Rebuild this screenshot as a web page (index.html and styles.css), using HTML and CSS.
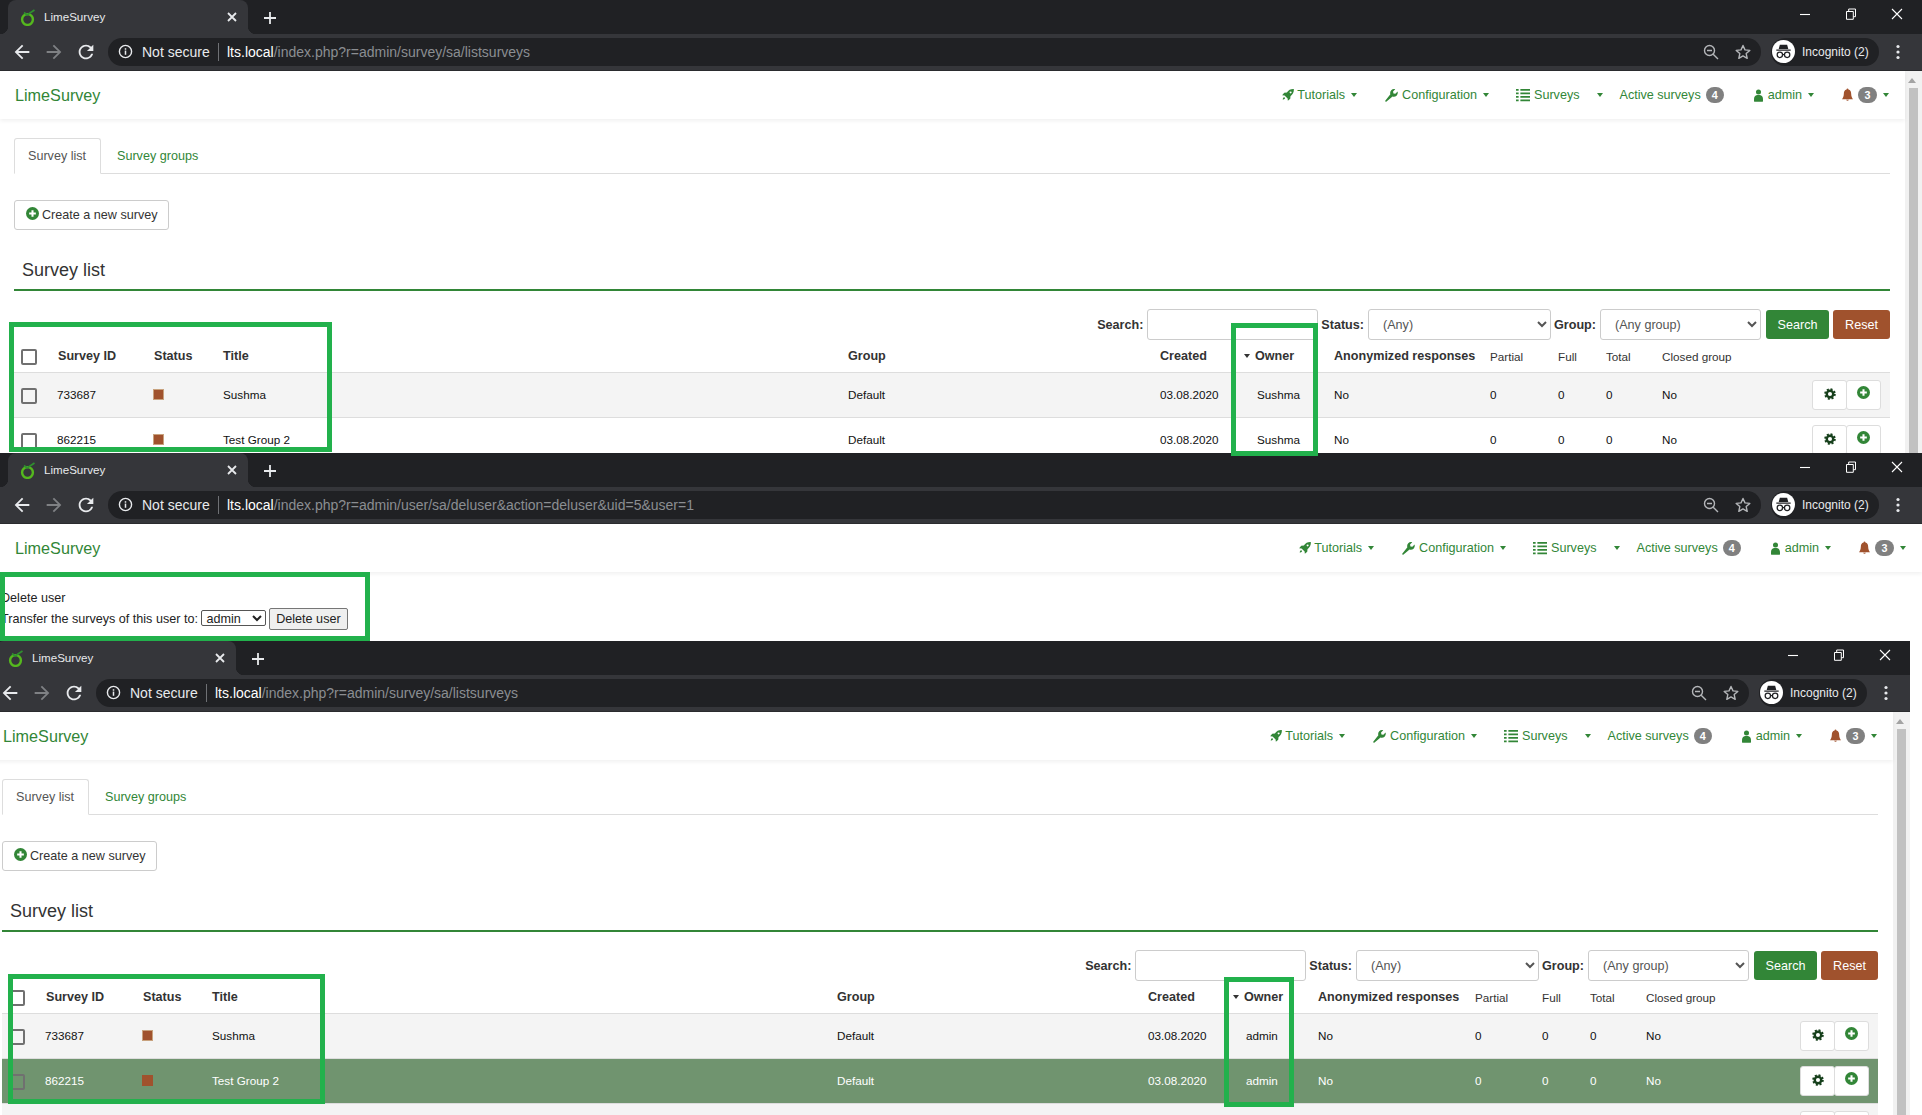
FILE: index.html
```html
<!DOCTYPE html>
<html lang="en">
<head>
<meta charset="utf-8">
<title>LimeSurvey</title>
<link rel="stylesheet" href="styles.css">
</head>
<body>
<svg class="defs" width="0" height="0" aria-hidden="true">
  <symbol id="i-lime" viewBox="0 0 15 17"><circle cx="7.500" cy="10.500" r="5.400" fill="none" stroke="#55b81e" stroke-width="2.400"/><path d="M4 3.500L7 6l7.500-5" fill="none" stroke="#2f8f2f" stroke-width="1.700"/></symbol>
  <symbol id="i-back" viewBox="0 0 24 24"><path d="M20 11H7.830l5.590-5.590L12 4l-8 8 8 8 1.410-1.410L7.830 13H20v-2z"/></symbol>
  <symbol id="i-fwd" viewBox="0 0 24 24"><path d="M12 4l-1.410 1.410L16.170 11H4v2h12.170l-5.580 5.590L12 20l8-8z"/></symbol>
  <symbol id="i-reload" viewBox="0 0 24 24"><path d="M17.650 6.350A7.958 7.958 0 0 0 12 4c-4.420 0-7.990 3.580-7.990 8s3.570 8 7.990 8c3.730 0 6.840-2.550 7.730-6h-2.080A5.990 5.990 0 0 1 12 18c-3.310 0-6-2.690-6-6s2.690-6 6-6c1.660 0 3.140.690 4.220 1.780L13 11h7V4l-2.350 2.350z"/></symbol>
  <symbol id="i-info" viewBox="0 0 16 16"><circle cx="8" cy="8" r="6.500" fill="none" stroke="currentColor" stroke-width="1.500"/><rect x="7.200" y="7" width="1.600" height="4.500" fill="currentColor"/><rect x="7.200" y="4.500" width="1.600" height="1.600" fill="currentColor"/></symbol>
  <symbol id="i-zoom" viewBox="0 0 16 16"><circle cx="6.500" cy="6.500" r="5" fill="none" stroke="currentColor" stroke-width="1.400"/><path d="M10.200 10.200l4.800 4.800M4 6.500h5" fill="none" stroke="currentColor" stroke-width="1.400"/></symbol>
  <symbol id="i-star" viewBox="0 0 16 16"><path d="M8 1.500l2 4.400 4.800.5-3.600 3.200 1 4.700L8 11.900l-4.200 2.400 1-4.700L1.200 6.400 6 5.900z" fill="none" stroke="currentColor" stroke-width="1.400" stroke-linejoin="round"/></symbol>
  <symbol id="i-incog" viewBox="0 0 24 24"><circle cx="12" cy="12" r="12" fill="#fff"/><path d="M8.200 5h7.600l1.200 4.500H7zM4.500 10h15v1.300h-15z" fill="#202124"/><circle cx="8.200" cy="15.500" r="2.800" fill="none" stroke="#202124" stroke-width="1.300"/><circle cx="15.800" cy="15.500" r="2.800" fill="none" stroke="#202124" stroke-width="1.300"/><path d="M11 15.200h2" stroke="#202124" stroke-width="1.300"/></symbol>
  <symbol id="i-kebab" viewBox="0 0 4 16"><circle cx="2" cy="2.500" r="1.600"/><circle cx="2" cy="8" r="1.600"/><circle cx="2" cy="13.500" r="1.600"/></symbol>
  <symbol id="i-restore" viewBox="0 0 12 12"><path d="M1.500 3.500h6.800v7.800H1.500zM3.700 3.500V1h6.800v7.700H8.300" fill="none" stroke="currentColor" stroke-width="1"/></symbol>
  <symbol id="i-close" viewBox="0 0 12 12"><path d="M1 1l10 10M11 1L1 11" fill="none" stroke="currentColor" stroke-width="1.100"/></symbol>
  <symbol id="i-min" viewBox="0 0 12 12"><path d="M1 6.500h10" fill="none" stroke="currentColor" stroke-width="1.100"/></symbol>
  <symbol id="i-x" viewBox="0 0 12 12"><path d="M2 2l8 8M10 2l-8 8" fill="none" stroke="currentColor" stroke-width="1.800"/></symbol>
  <symbol id="i-plus" viewBox="0 0 14 14"><path d="M7 1v12M1 7h12" fill="none" stroke="currentColor" stroke-width="1.800"/></symbol>
  <symbol id="i-rocket" viewBox="0 0 16 16"><path fill-rule="evenodd" d="M15.800.2c-3.700-.3-7 1.200-9.300 4.500L3 5 .2 8.200l3.200.3 4.100 4.100.3 3.200L11 13l.3-3.500c3.300-2.300 4.800-5.600 4.500-9.300zM11.500 3.200a1.300 1.300 0 1 1-.01 0zM2.800 10.800c-1 .5-1.700 2.200-1.900 3.300 1.100-.2 2.800-.9 3.300-1.900z"/></symbol>
  <symbol id="i-wrench" viewBox="0 0 16 16"><path d="M15.500 3.200l-2.800 2.700-2.300-.5-.5-2.300L12.600.4C10.900-.2 9 .2 7.700 1.500 6.400 2.800 6 4.700 6.600 6.400L.5 14c-.4.500-.3 1 .1 1.400.4.400.9.400 1.300 0L9.300 9.300c1.700.6 3.600.2 4.900-1.100 1.300-1.300 1.800-3.300 1.300-5z"/></symbol>
  <symbol id="i-list" viewBox="0 0 16 16"><path d="M0 1h3v2H0zM5 1h11v2H5zM0 5h3v2H0zM5 5h11v2H5zM0 9h3v2H0zM5 9h11v2H5zM0 13h3v2H0zM5 13h11v2H5z"/></symbol>
  <symbol id="i-user" viewBox="0 0 10 14"><circle cx="5" cy="3" r="2.800"/><path d="M0 13c0-3.500 0-6.500 5-6.500s5 3 5 6.500c0 .6-.4 1-1 1H1c-.6 0-1-.4-1-1z"/></symbol>
  <symbol id="i-bell" viewBox="0 0 12 14"><path d="M6 0c-.6 0-1 .4-1 1-2.200.5-3 2.300-3 4.500C2 8.500 1 10 0 11.500h12c-1-1.500-2-3-2-6C10 3.300 9.200 1.500 7 1c0-.6-.4-1-1-1zM4.500 12.300a1.600 1.600 0 0 0 3 0z"/></symbol>
  <symbol id="i-gear" viewBox="0 0 16 16"><circle cx="8" cy="8" r="4.300" fill="none" stroke="currentColor" stroke-width="3.200"/><circle cx="8" cy="8" r="6.500" fill="none" stroke="currentColor" stroke-width="2.400" stroke-dasharray="2.700 2.400"/></symbol>
  <symbol id="i-pluscircle" viewBox="0 0 14 14"><circle cx="7" cy="7" r="7" fill="currentColor"/><path d="M7 3.400v7.200M3.400 7h7.200" stroke="#fff" stroke-width="2.200"/></symbol>
</svg>

<main class="desktop">

  <!-- Window 1: survey list, owner Sushma -->
  <section class="window win-top">
    <header class="tabstrip">
      <div class="tab"><svg class="fav"><use href="#i-lime"/></svg><span class="tab-title">LimeSurvey</span><svg class="tab-x"><use href="#i-x"/></svg></div>
      <svg class="newtab"><use href="#i-plus"/></svg>
      <div class="winctl"><span><svg class="ctl"><use href="#i-min"/></svg></span><span><svg class="ctl"><use href="#i-restore"/></svg></span><span><svg class="ctl"><use href="#i-close"/></svg></span></div>
    </header>
    <div class="toolbar">
      <svg class="nav-ic"><use href="#i-back"/></svg><svg class="nav-ic dim"><use href="#i-fwd"/></svg><svg class="nav-ic"><use href="#i-reload"/></svg>
      <div class="omnibox"><svg class="om-info"><use href="#i-info"/></svg><span class="notsecure">Not secure</span><i class="om-sep"></i><span class="url"><b>lts.local</b>/index.php?r=admin/survey/sa/listsurveys</span><svg class="om-ic om-push"><use href="#i-zoom"/></svg><svg class="om-ic"><use href="#i-star"/></svg></div>
      <div class="profile"><svg class="incog"><use href="#i-incog"/></svg><span>Incognito (2)</span></div>
      <svg class="kebab"><use href="#i-kebab"/></svg>
    </div>
    <div class="viewport">
      <div class="page">
        <nav class="navbar">
          <a class="brand">LimeSurvey</a>
          <div class="menu">
            <span class="mi"><svg class="ic ic-rocket"><use href="#i-rocket"/></svg>Tutorials<i class="caret"></i></span>
            <span class="mi"><svg class="ic ic-wrench"><use href="#i-wrench"/></svg>Configuration<i class="caret"></i></span>
            <span class="mi mi-surveys"><svg class="ic ic-list"><use href="#i-list"/></svg>Surveys<i class="caret caret-far"></i></span>
            <span class="mi mi-active">Active surveys<em class="badge">4</em></span>
            <span class="mi"><svg class="ic ic-user"><use href="#i-user"/></svg>admin<i class="caret"></i></span>
            <span class="mi mi-last"><svg class="ic ic-bell"><use href="#i-bell"/></svg><em class="badge">3</em><i class="caret"></i></span>
          </div>
        </nav>
        <div class="content">
          <div class="tabs"><span class="ptab active">Survey list</span><span class="ptab">Survey groups</span></div>
          <button class="btn-create"><svg class="ic-plus"><use href="#i-pluscircle"/></svg>Create a new survey</button>
          <h2 class="heading">Survey list</h2>
          <form class="filters">
            <label>Search:</label><input class="f-search" type="text">
            <label>Status:</label><select class="f-status"><option>(Any)</option></select>
            <label>Group:</label><select class="f-group"><option>(Any group)</option></select>
            <button type="button" class="btn-search">Search</button><button type="button" class="btn-reset">Reset</button>
          </form>
          <table class="grid">
            <colgroup><col class="c-check"><col class="c-id"><col class="c-status"><col class="c-title"><col class="c-group"><col class="c-created"><col class="c-owner"><col class="c-anon"><col class="c-partial"><col class="c-full"><col class="c-total"><col class="c-closed"><col class="c-actions"></colgroup>
            <thead><tr><th><input type="checkbox"></th><th>Survey ID</th><th>Status</th><th>Title</th><th>Group</th><th>Created</th><th class="td-owner"><i class="sort"></i>Owner</th><th>Anonymized responses</th><th class="th-light">Partial</th><th class="th-light">Full</th><th class="th-light">Total</th><th class="th-light">Closed group</th><th></th></tr></thead>
            <tbody>
              <tr class="odd"><td><input type="checkbox"></td><td>733687</td><td><i class="stat"></i></td><td>Sushma</td><td>Default</td><td>03.08.2020</td><td class="td-owner">Sushma</td><td>No</td><td>0</td><td>0</td><td>0</td><td>No</td><td class="td-act"><button class="act"><svg class="ic-gear"><use href="#i-gear"/></svg></button><button class="act"><svg class="ic-add"><use href="#i-pluscircle"/></svg></button></td></tr>
              <tr><td><input type="checkbox"></td><td>862215</td><td><i class="stat"></i></td><td>Test Group 2</td><td>Default</td><td>03.08.2020</td><td class="td-owner">Sushma</td><td>No</td><td>0</td><td>0</td><td>0</td><td>No</td><td class="td-act"><button class="act"><svg class="ic-gear"><use href="#i-gear"/></svg></button><button class="act"><svg class="ic-add"><use href="#i-pluscircle"/></svg></button></td></tr>
            </tbody>
          </table>
        </div>
      </div>
      <div class="scrollbar"><i class="sb-up"></i><i class="sb-thumb"></i></div>
    </div>
  </section>

  <!-- Window 2: delete user -->
  <section class="window win-mid">
    <header class="tabstrip">
      <div class="tab"><svg class="fav"><use href="#i-lime"/></svg><span class="tab-title">LimeSurvey</span><svg class="tab-x"><use href="#i-x"/></svg></div>
      <svg class="newtab"><use href="#i-plus"/></svg>
      <div class="winctl"><span><svg class="ctl"><use href="#i-min"/></svg></span><span><svg class="ctl"><use href="#i-restore"/></svg></span><span><svg class="ctl"><use href="#i-close"/></svg></span></div>
    </header>
    <div class="toolbar">
      <svg class="nav-ic"><use href="#i-back"/></svg><svg class="nav-ic dim"><use href="#i-fwd"/></svg><svg class="nav-ic"><use href="#i-reload"/></svg>
      <div class="omnibox"><svg class="om-info"><use href="#i-info"/></svg><span class="notsecure">Not secure</span><i class="om-sep"></i><span class="url"><b>lts.local</b>/index.php?r=admin/user/sa/deluser&amp;action=deluser&amp;uid=5&amp;user=1</span><svg class="om-ic om-push"><use href="#i-zoom"/></svg><svg class="om-ic"><use href="#i-star"/></svg></div>
      <div class="profile"><svg class="incog"><use href="#i-incog"/></svg><span>Incognito (2)</span></div>
      <svg class="kebab"><use href="#i-kebab"/></svg>
    </div>
    <div class="viewport">
      <div class="page">
        <nav class="navbar">
          <a class="brand">LimeSurvey</a>
          <div class="menu">
            <span class="mi"><svg class="ic ic-rocket"><use href="#i-rocket"/></svg>Tutorials<i class="caret"></i></span>
            <span class="mi"><svg class="ic ic-wrench"><use href="#i-wrench"/></svg>Configuration<i class="caret"></i></span>
            <span class="mi mi-surveys"><svg class="ic ic-list"><use href="#i-list"/></svg>Surveys<i class="caret caret-far"></i></span>
            <span class="mi mi-active">Active surveys<em class="badge">4</em></span>
            <span class="mi"><svg class="ic ic-user"><use href="#i-user"/></svg>admin<i class="caret"></i></span>
            <span class="mi mi-last"><svg class="ic ic-bell"><use href="#i-bell"/></svg><em class="badge">3</em><i class="caret"></i></span>
          </div>
        </nav>
        <div class="deluser">
          <p>Delete user</p>
          <form class="transfer">Transfer the surveys of this user to: <select><option>admin</option></select> <button type="button">Delete user</button></form>
        </div>
      </div>
    </div>
  </section>

  <!-- Window 3: survey list, owner admin -->
  <section class="window win-bot">
    <header class="tabstrip">
      <div class="tab"><svg class="fav"><use href="#i-lime"/></svg><span class="tab-title">LimeSurvey</span><svg class="tab-x"><use href="#i-x"/></svg></div>
      <svg class="newtab"><use href="#i-plus"/></svg>
      <div class="winctl"><span><svg class="ctl"><use href="#i-min"/></svg></span><span><svg class="ctl"><use href="#i-restore"/></svg></span><span><svg class="ctl"><use href="#i-close"/></svg></span></div>
    </header>
    <div class="toolbar">
      <svg class="nav-ic"><use href="#i-back"/></svg><svg class="nav-ic dim"><use href="#i-fwd"/></svg><svg class="nav-ic"><use href="#i-reload"/></svg>
      <div class="omnibox"><svg class="om-info"><use href="#i-info"/></svg><span class="notsecure">Not secure</span><i class="om-sep"></i><span class="url"><b>lts.local</b>/index.php?r=admin/survey/sa/listsurveys</span><svg class="om-ic om-push"><use href="#i-zoom"/></svg><svg class="om-ic"><use href="#i-star"/></svg></div>
      <div class="profile"><svg class="incog"><use href="#i-incog"/></svg><span>Incognito (2)</span></div>
      <svg class="kebab"><use href="#i-kebab"/></svg>
    </div>
    <div class="viewport">
      <div class="page">
        <nav class="navbar">
          <a class="brand">LimeSurvey</a>
          <div class="menu">
            <span class="mi"><svg class="ic ic-rocket"><use href="#i-rocket"/></svg>Tutorials<i class="caret"></i></span>
            <span class="mi"><svg class="ic ic-wrench"><use href="#i-wrench"/></svg>Configuration<i class="caret"></i></span>
            <span class="mi mi-surveys"><svg class="ic ic-list"><use href="#i-list"/></svg>Surveys<i class="caret caret-far"></i></span>
            <span class="mi mi-active">Active surveys<em class="badge">4</em></span>
            <span class="mi"><svg class="ic ic-user"><use href="#i-user"/></svg>admin<i class="caret"></i></span>
            <span class="mi mi-last"><svg class="ic ic-bell"><use href="#i-bell"/></svg><em class="badge">3</em><i class="caret"></i></span>
          </div>
        </nav>
        <div class="content">
          <div class="tabs"><span class="ptab active">Survey list</span><span class="ptab">Survey groups</span></div>
          <button class="btn-create"><svg class="ic-plus"><use href="#i-pluscircle"/></svg>Create a new survey</button>
          <h2 class="heading">Survey list</h2>
          <form class="filters">
            <label>Search:</label><input class="f-search" type="text">
            <label>Status:</label><select class="f-status"><option>(Any)</option></select>
            <label>Group:</label><select class="f-group"><option>(Any group)</option></select>
            <button type="button" class="btn-search">Search</button><button type="button" class="btn-reset">Reset</button>
          </form>
          <table class="grid">
            <colgroup><col class="c-check"><col class="c-id"><col class="c-status"><col class="c-title"><col class="c-group"><col class="c-created"><col class="c-owner"><col class="c-anon"><col class="c-partial"><col class="c-full"><col class="c-total"><col class="c-closed"><col class="c-actions"></colgroup>
            <thead><tr><th><input type="checkbox"></th><th>Survey ID</th><th>Status</th><th>Title</th><th>Group</th><th>Created</th><th class="td-owner"><i class="sort"></i>Owner</th><th>Anonymized responses</th><th class="th-light">Partial</th><th class="th-light">Full</th><th class="th-light">Total</th><th class="th-light">Closed group</th><th></th></tr></thead>
            <tbody>
              <tr class="odd"><td><input type="checkbox"></td><td>733687</td><td><i class="stat"></i></td><td>Sushma</td><td>Default</td><td>03.08.2020</td><td class="td-owner">admin</td><td>No</td><td>0</td><td>0</td><td>0</td><td>No</td><td class="td-act"><button class="act"><svg class="ic-gear"><use href="#i-gear"/></svg></button><button class="act"><svg class="ic-add"><use href="#i-pluscircle"/></svg></button></td></tr>
              <tr class="picked"><td><input type="checkbox"></td><td>862215</td><td><i class="stat"></i></td><td>Test Group 2</td><td>Default</td><td>03.08.2020</td><td class="td-owner">admin</td><td>No</td><td>0</td><td>0</td><td>0</td><td>No</td><td class="td-act"><button class="act"><svg class="ic-gear"><use href="#i-gear"/></svg></button><button class="act"><svg class="ic-add"><use href="#i-pluscircle"/></svg></button></td></tr>
              <tr class="odd"><td></td><td></td><td></td><td></td><td></td><td></td><td></td><td></td><td></td><td></td><td></td><td></td><td class="td-act"><button class="act"></button><button class="act"></button></td></tr>
            </tbody>
          </table>
        </div>
      </div>
      <div class="scrollbar"><i class="sb-up"></i><i class="sb-thumb"></i></div>
    </div>
  </section>

  <!-- Green annotation frames drawn over the screenshots -->
  <div class="mark m1"></div>
  <div class="mark m2"></div>
  <div class="mark m3"></div>
  <div class="mark m4"></div>
  <div class="mark m5"></div>
</main>
</body>
</html>
```
FILE: styles.css
```css
* { box-sizing: border-box; }
html, body { margin: 0; padding: 0; height: 100%; overflow: hidden; background: #fff; }
body { font-family: "Liberation Sans", Arial, sans-serif; font-size: 12.6px; color: #333; }
.defs { position: absolute; }
svg { display: block; flex: none; fill: currentColor; }

.desktop { position: relative; width: 1922px; height: 1115px; overflow: hidden; background: #fff; }
.window { position: absolute; display: flex; flex-direction: column; overflow: hidden; width: 1922px; }
.win-top { left: 0; top: 0; height: 453px; }
.win-mid { left: 0; top: 453px; height: 188px; }
.win-bot { left: -12px; top: 641px; height: 474px; }

/* Browser chrome */
.tabstrip { flex: none; height: 34px; background: #202124; display: flex; align-items: flex-end; padding: 0 2px 0 8px; color: #e8eaed; }
.tab { position: relative; width: 240px; height: 34px; background: #35363a; border-radius: 8px 8px 0 0; display: flex; align-items: center; padding-left: 12px; }
.tab::before, .tab::after { content: ""; position: absolute; bottom: 0; width: 8px; height: 8px; }
.tab::before { left: -8px; background: radial-gradient(circle at 0 0, #202124 8px, #35363a 8.5px); }
.tab::after { right: -8px; background: radial-gradient(circle at 100% 0, #202124 8px, #35363a 8.5px); }
.fav { width: 15px; height: 17px; margin-right: 9px; }
.tab-title { font-size: 11.6px; color: #e8eaed; width: 182px; margin-top: -1px; }
.tab-x { width: 12px; height: 12px; color: #e8eaed; }
.newtab { width: 14px; height: 14px; margin: 0 0 9px 15px; color: #e8eaed; }
.winctl { margin-left: auto; display: flex; height: 34px; align-self: flex-start; }
.winctl span { width: 46px; display: flex; align-items: center; justify-content: center; }
.ctl { width: 12px; height: 12px; color: #fff; margin-top: -6px; }

.toolbar { flex: none; height: 37px; background: #35363a; border-bottom: 1px solid #2a2b2e; display: flex; align-items: center; padding: 0 0 1px 11px; color: #e8eaed; }
.nav-ic { width: 22px; height: 22px; margin-right: 10px; }
.nav-ic.dim { color: #7f8184; }
.omnibox { width: 1653px; height: 28px; margin-left: 1px; background: #202124; border-radius: 14px; display: flex; align-items: center; padding-left: 10px; }
.om-info { width: 15px; height: 15px; margin-right: 9px; color: #e8eaed; }
.notsecure { font-size: 14px; color: #e8eaed; width: 76px; }
.om-sep { width: 1px; height: 18px; background: #6f7175; margin-right: 8px; }
.url { font-size: 14px; color: #8b8e92; }
.url b { font-weight: normal; color: #fff; }
.om-ic { width: 16px; height: 16px; color: #b4b6b9; margin-right: 10px; }
.om-push { margin-left: auto; margin-right: 16px; }
.profile { width: 108px; height: 28px; margin-left: 10px; background: #202124; border-radius: 14px; display: flex; align-items: center; padding-left: 1px; gap: 7px; font-size: 12px; color: #e8eaed; }
.incog { width: 23px; height: 23px; }
.kebab { width: 4px; height: 16px; margin-left: 17px; color: #e8eaed; }

/* Page frame */
.viewport { flex: 1; min-height: 0; display: flex; background: #fff; overflow: hidden; }
.page { flex: 1; min-width: 0; }
.scrollbar { flex: none; width: 17px; background: #f1f1f1; display: flex; flex-direction: column; }
.sb-up { height: 17px; flex: none; position: relative; }
.sb-up::after { content: ""; position: absolute; left: 3px; top: 7px; border: 4px solid transparent; border-top: 0; border-bottom: 5px solid #a3a3a3; }
.sb-thumb { flex: 1; background: #c1c1c1; margin: 0 4px; }

/* Site navbar */
.navbar { height: 48px; display: flex; align-items: center; justify-content: space-between; padding: 0 0 0 15px; box-shadow: 0 2px 4px rgba(0,0,0,.06); color: #328637; position: relative; }
.brand { font-size: 16.2px; color: #328637; }
.menu { display: flex; align-items: center; padding-right: 16px; }
.mi { display: flex; align-items: center; white-space: nowrap; margin-left: 26px; }
.mi:nth-child(2) { margin-left: 28px; }
.mi-surveys { position: relative; padding-right: 40px; }
.mi-active { margin-left: 0; }
.mi-active + .mi { margin-left: 30px; }
.mi-last { margin-left: 28px; }
.ic { margin-right: 3px; }
.ic-rocket { width: 12px; height: 12px; }
.ic-wrench { width: 13px; height: 13px; margin-right: 4px; }
.ic-list { width: 16px; height: 14px; }
.ic-user { width: 9px; height: 13px; margin-right: 5px; }
.ic-bell { width: 11px; height: 14px; color: #a0522d; margin-right: 5px; }
.caret { width: 0; height: 0; margin-left: 6px; border-left: 3.6px solid transparent; border-right: 3.6px solid transparent; border-top: 4px solid currentColor; }
.caret-far { position: absolute; right: 17px; margin: 0; }
.badge { display: inline-block; font-style: normal; font-weight: bold; font-size: 10.8px; color: #fff; background: #808080; border-radius: 9px; width: 18px; height: 16px; line-height: 16px; text-align: center; margin-left: 5px; }
.mi-last .badge { margin-left: 0; width: 19px; }

/* Page body */
.content { padding: 19px 15px 0 14px; }
.tabs { height: 36px; display: flex; border-bottom: 1px solid #ddd; }
.ptab { height: 36px; padding: 0 16px; line-height: 37px; color: #328637; }
.ptab.active { width: 87px; color: #555; background: #fff; border: 1px solid #ddd; border-bottom-color: #fff; border-radius: 3px 3px 0 0; padding: 0 13px; line-height: 35px; }
.btn-create { display: flex; align-items: center; width: 155px; height: 30px; margin-top: 26px; padding: 0 0 0 11px; background: #fff; border: 1px solid #ccc; border-radius: 3px; font: 12.6px "Liberation Sans", Arial, sans-serif; color: #333; }
.ic-plus { width: 13px; height: 13px; color: #328637; margin: -3px 3px 0 0; }
.heading { margin: 22px 0 0; height: 39px; padding-left: 8px; border-bottom: 2px solid #328637; font-size: 18px; font-weight: normal; line-height: 37px; color: #333; }
.filters { display: flex; justify-content: flex-end; align-items: center; height: 31px; margin-top: 18px; }
.filters label { font-weight: bold; margin-right: 4px; }
.filters input, .filters select { height: 31px; background: #fff; border: 1px solid #ccc; border-radius: 3px; font: 12.6px "Liberation Sans", Arial, sans-serif; color: #555; }
.f-search { width: 171px; margin-right: 3px; }
.f-status { width: 183px; padding-left: 10px; margin-right: 3px; }
.f-group { width: 161px; padding-left: 10px; margin-right: 5px; }
.filters button { height: 29px; border-radius: 3px; color: #fff; font: 12.6px "Liberation Sans", Arial, sans-serif; border: 1px solid transparent; }
.btn-search { width: 63px; background: #328637; margin-right: 4px; }
.btn-reset { width: 57px; background: #a0522d; }

/* Table */
.grid { table-layout: fixed; width: 1876px; border-collapse: collapse; font-size: 11.7px; color: #111; }
.c-check { width: 36px; }
.c-id { width: 96px; }
.c-status { width: 69px; }
.c-title { width: 625px; }
.c-group { width: 312px; }
.c-created { width: 84px; }
.c-owner { width: 90px; }
.c-anon { width: 156px; }
.c-partial { width: 68px; }
.c-full { width: 48px; }
.c-total { width: 56px; }
.c-closed { width: 144px; }
.c-actions { width: 92px; }
.win-bot .c-id { width: 97px; }
.win-bot .c-group { width: 311px; }
.win-bot .c-owner { width: 86px; }
.win-bot .c-anon { width: 157px; }
.win-bot .c-partial { width: 67px; }
.win-bot .c-closed { width: 148px; }
.grid th { height: 32px; padding: 0 0 0 8px; text-align: left; font-size: 12.6px; font-weight: bold; color: #333; white-space: nowrap; }
.grid th.th-light { font-size: 11.7px; font-weight: normal; padding-top: 2px; }
.grid th:first-child, .grid td:first-child { padding-left: 7px; }
.grid td { height: 45px; padding: 0 0 0 8px; border-top: 1px solid #ddd; white-space: nowrap; }
.grid td:nth-child(2) { padding-left: 7px; }
.grid .odd td { background: #f4f4f4; }
.grid .picked td { background: #70946f; color: #fff; }
.grid .td-owner { padding-left: 21px; }
.win-bot .grid .td-owner { padding-left: 22px; }
.grid input[type=checkbox] { appearance: none; display: block; width: 16px; height: 16px; margin: 2px 0 0; background: transparent; border: 2px solid #707070; border-radius: 2px; }
.sort { display: inline-block; width: 0; height: 0; margin: 0 5px 2px -13px; border-left: 3px solid transparent; border-right: 3px solid transparent; border-top: 4px solid #333; }
.stat { display: block; width: 11px; height: 11px; margin-left: -1px; background: #a0522d; border: 1px solid #c8a27e; }
.picked .stat { border-color: #a0522d; }
.grid .td-act { padding-left: 14px; }
.act { display: inline-flex; vertical-align: middle; align-items: center; justify-content: center; width: 35px; height: 30px; padding: 0; margin-right: -1px; background: #fff; border: 1px solid #ddd; border-radius: 3px; }
.ic-gear { width: 12px; height: 12px; color: #17401c; margin-top: -1px; }
.ic-add { width: 13px; height: 13px; color: #328637; margin-top: -5px; }

/* Delete-user stub */
.deluser { padding: 16px 0 0 1px; font-size: 12.6px; color: #222; }
.deluser p { margin: 0; height: 20px; line-height: 20px; }
.transfer select { width: 65px; height: 16px; font: 12.6px "Liberation Sans", Arial, sans-serif; color: #222; background: #fff; border: 1px solid #555; border-radius: 2px; padding: 0; }
.transfer button { width: 79px; height: 22px; margin-left: -1px; font: 12.6px "Liberation Sans", Arial, sans-serif; color: #222; background: #efefef; border: 1px solid #767676; border-radius: 2px; padding: 0; }

/* Annotation frames */
.mark { position: absolute; border: 5px solid #22b14c; }
.m1 { left: 9px; top: 322px; width: 323px; height: 130px; }
.m2 { left: 1231px; top: 323px; width: 87px; height: 133px; }
.m3 { left: 0; top: 572px; width: 370px; height: 69px; }
.m4 { left: 8px; top: 974px; width: 317px; height: 130px; }
.m5 { left: 1224px; top: 977px; width: 70px; height: 130px; }
```
